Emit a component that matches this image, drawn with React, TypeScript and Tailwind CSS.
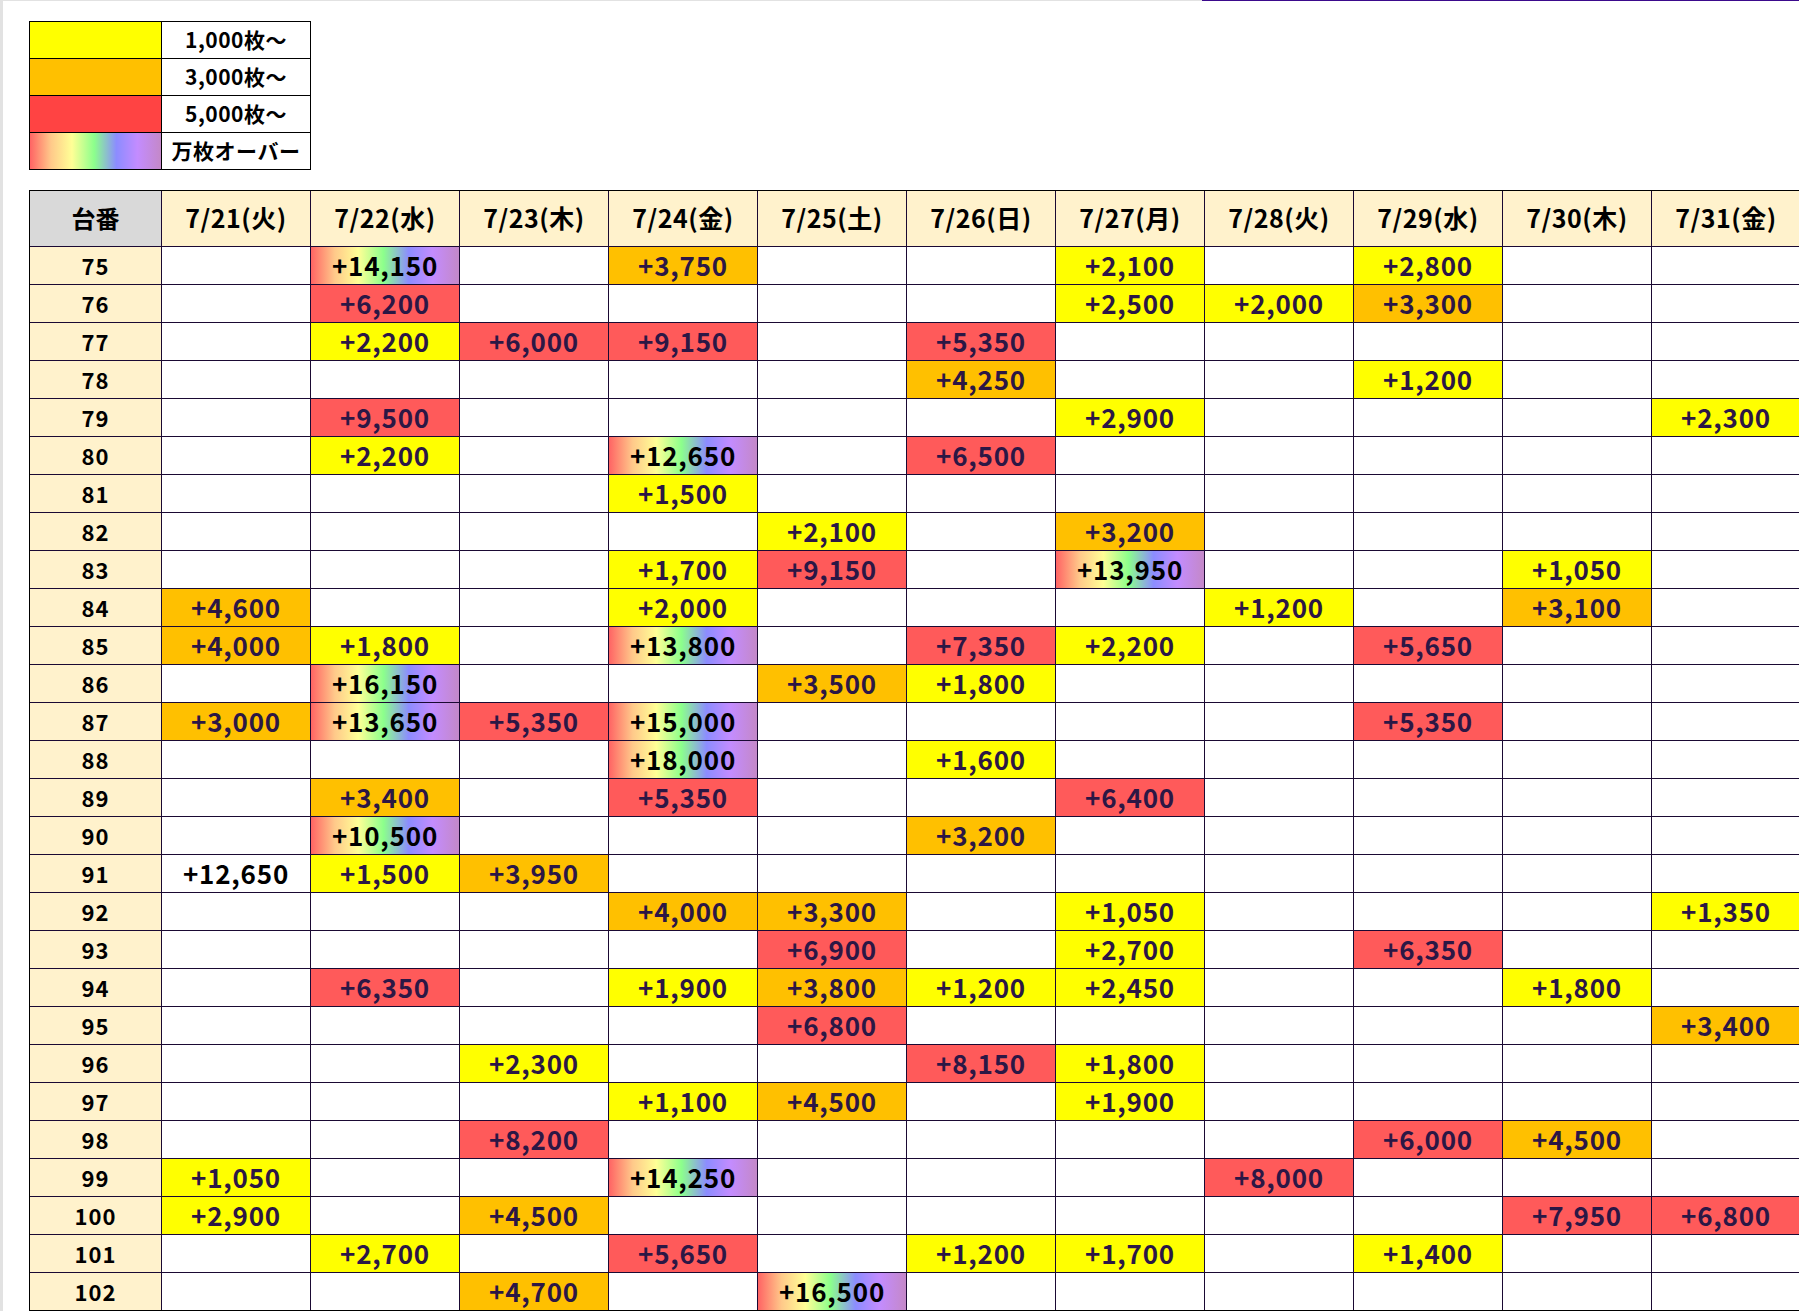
import React from "react";

type Tone = "y" | "o" | "r" | "m" | "w";

const days = [
  "7/21(火)",
  "7/22(水)",
  "7/23(木)",
  "7/24(金)",
  "7/25(土)",
  "7/26(日)",
  "7/27(月)",
  "7/28(火)",
  "7/29(水)",
  "7/30(木)",
  "7/31(金)",
];

// [column index, value, tone]
const rows: { no: number; cells: [number, string, Tone][] }[] = [
  { no: 75, cells: [[1, "+14,150", "m"], [3, "+3,750", "o"], [6, "+2,100", "y"], [8, "+2,800", "y"]] },
  { no: 76, cells: [[1, "+6,200", "r"], [6, "+2,500", "y"], [7, "+2,000", "y"], [8, "+3,300", "o"]] },
  { no: 77, cells: [[1, "+2,200", "y"], [2, "+6,000", "r"], [3, "+9,150", "r"], [5, "+5,350", "r"]] },
  { no: 78, cells: [[5, "+4,250", "o"], [8, "+1,200", "y"]] },
  { no: 79, cells: [[1, "+9,500", "r"], [6, "+2,900", "y"], [10, "+2,300", "y"]] },
  { no: 80, cells: [[1, "+2,200", "y"], [3, "+12,650", "m"], [5, "+6,500", "r"]] },
  { no: 81, cells: [[3, "+1,500", "y"]] },
  { no: 82, cells: [[4, "+2,100", "y"], [6, "+3,200", "o"]] },
  { no: 83, cells: [[3, "+1,700", "y"], [4, "+9,150", "r"], [6, "+13,950", "m"], [9, "+1,050", "y"]] },
  { no: 84, cells: [[0, "+4,600", "o"], [3, "+2,000", "y"], [7, "+1,200", "y"], [9, "+3,100", "o"]] },
  { no: 85, cells: [[0, "+4,000", "o"], [1, "+1,800", "y"], [3, "+13,800", "m"], [5, "+7,350", "r"], [6, "+2,200", "y"], [8, "+5,650", "r"]] },
  { no: 86, cells: [[1, "+16,150", "m"], [4, "+3,500", "o"], [5, "+1,800", "y"]] },
  { no: 87, cells: [[0, "+3,000", "o"], [1, "+13,650", "m"], [2, "+5,350", "r"], [3, "+15,000", "m"], [8, "+5,350", "r"]] },
  { no: 88, cells: [[3, "+18,000", "m"], [5, "+1,600", "y"]] },
  { no: 89, cells: [[1, "+3,400", "o"], [3, "+5,350", "r"], [6, "+6,400", "r"]] },
  { no: 90, cells: [[1, "+10,500", "m"], [5, "+3,200", "o"]] },
  { no: 91, cells: [[0, "+12,650", "w"], [1, "+1,500", "y"], [2, "+3,950", "o"]] },
  { no: 92, cells: [[3, "+4,000", "o"], [4, "+3,300", "o"], [6, "+1,050", "y"], [10, "+1,350", "y"]] },
  { no: 93, cells: [[4, "+6,900", "r"], [6, "+2,700", "y"], [8, "+6,350", "r"]] },
  { no: 94, cells: [[1, "+6,350", "r"], [3, "+1,900", "y"], [4, "+3,800", "o"], [5, "+1,200", "y"], [6, "+2,450", "y"], [9, "+1,800", "y"]] },
  { no: 95, cells: [[4, "+6,800", "r"], [10, "+3,400", "o"]] },
  { no: 96, cells: [[2, "+2,300", "y"], [5, "+8,150", "r"], [6, "+1,800", "y"]] },
  { no: 97, cells: [[3, "+1,100", "y"], [4, "+4,500", "o"], [6, "+1,900", "y"]] },
  { no: 98, cells: [[2, "+8,200", "r"], [8, "+6,000", "r"], [9, "+4,500", "o"]] },
  { no: 99, cells: [[0, "+1,050", "y"], [3, "+14,250", "m"], [7, "+8,000", "r"]] },
  { no: 100, cells: [[0, "+2,900", "y"], [2, "+4,500", "o"], [9, "+7,950", "r"], [10, "+6,800", "r"]] },
  { no: 101, cells: [[1, "+2,700", "y"], [3, "+5,650", "r"], [5, "+1,200", "y"], [6, "+1,700", "y"], [8, "+1,400", "y"]] },
  { no: 102, cells: [[2, "+4,700", "o"], [4, "+16,500", "m"]] },
];

const rainbow =
  "bg-[linear-gradient(to_right,#ff6464_0%,#ffc98a_16%,#ffff96_32%,#8cff8c_49%,#8c8cff_66%,#c38cff_82%,#c488c8_100%)]";

const toneClass: Record<Tone, string> = {
  y: "bg-[#ffff00] text-[#2c1745]",
  o: "bg-[#ffc000] text-[#2c1745]",
  r: "bg-[#ff5a5a] text-[#2c1745]",
  m: `${rainbow} text-black`,
  w: "bg-white text-black",
};

const legend = [
  { swatch: "bg-[#ffff00]", label: "1,000枚〜" },
  { swatch: "bg-[#ffc000]", label: "3,000枚〜" },
  { swatch: "bg-[#ff4343]", label: "5,000枚〜" },
  { swatch: rainbow, label: "万枚オーバー" },
];

export default function App() {
  return (
    <div
      className="min-h-screen bg-white border-l-[3px] border-[#e2e2e2] font-bold"
      style={{ fontFamily: '"Noto Sans CJK JP", "Noto Sans", sans-serif' }}
    >
      {/* top rule */}
      <div className="flex h-px">
        <div className="w-[1199px] bg-[#e2e2e2]" />
        <div className="flex-1 bg-[#3b0a8c]" />
      </div>

      <div className="pl-[26px] pt-[20px]">
        {/* legend */}
        <div className="grid w-max grid-cols-[131px_148px] gap-px border border-black bg-black">
          {legend.map((l) => (
            <React.Fragment key={l.label}>
              <div className={`h-[36px] ${l.swatch}`} />
              <div className="flex h-[36px] items-center justify-center bg-white pb-[2px] text-[21px] leading-none tracking-[0.5px] text-black">
                {l.label}
              </div>
            </React.Fragment>
          ))}
        </div>

        {/* main table */}
        <div className="mt-[20px] grid w-max grid-cols-[131px_repeat(11,148px)] gap-px border border-black bg-[#1a0933]">
          <div className="flex h-[55px] items-center justify-center bg-[#d9d9d9] pb-[2px] text-[24px] leading-none text-black">
            台番
          </div>
          {days.map((d) => (
            <div
              key={d}
              className="flex h-[55px] items-center justify-center bg-[#fff2cc] pb-[2px] text-[25px] leading-none tracking-[0.5px] text-black"
            >
              {d}
            </div>
          ))}

          {rows.map((r) => {
            const map = new Map(r.cells.map((c) => [c[0], c]));
            return (
              <React.Fragment key={r.no}>
                <div className="flex h-[37px] items-center justify-center bg-[#fff2cc] pb-[2px] text-[22px] leading-none tracking-[1px] text-black">
                  {r.no}
                </div>
                {days.map((_, i) => {
                  const c = map.get(i);
                  return (
                    <div
                      key={i}
                      className={`flex h-[37px] items-center justify-center pb-[2px] text-[26px] leading-none tracking-[0.8px] ${
                        c ? toneClass[c[2]] : "bg-white"
                      }`}
                    >
                      {c ? c[1] : ""}
                    </div>
                  );
                })}
              </React.Fragment>
            );
          })}
        </div>
      </div>
    </div>
  );
}
